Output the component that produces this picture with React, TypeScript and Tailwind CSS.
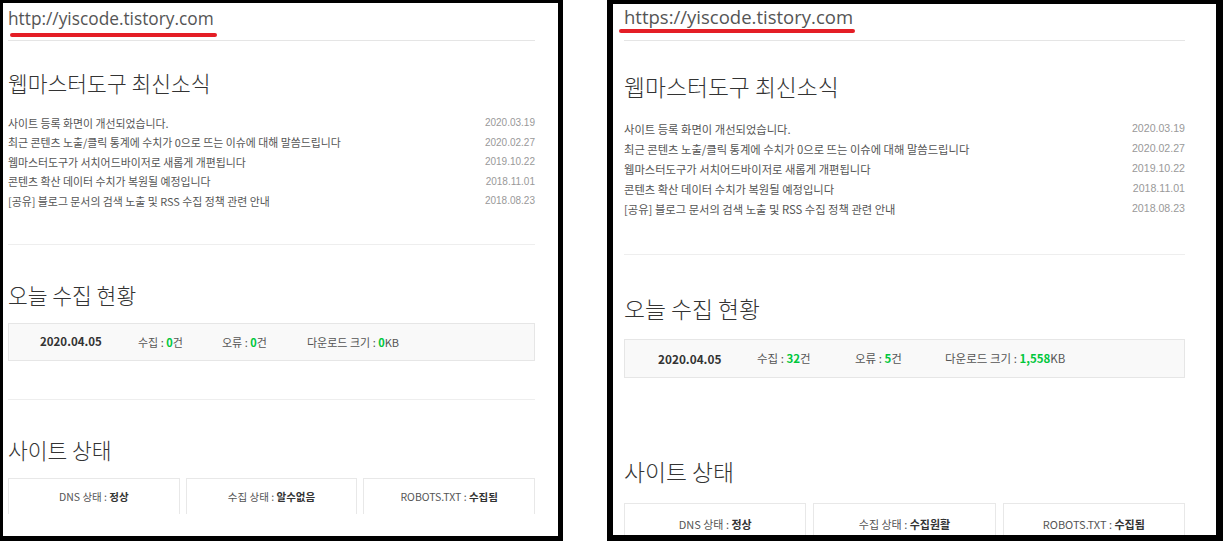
import React from "react";

const items: [string, string][] = [
  ["사이트 등록 화면이 개선되었습니다.", "2020.03.19"],
  ["최근 콘텐츠 노출/클릭 통계에 수치가 0으로 뜨는 이슈에 대해 말씀드립니다", "2020.02.27"],
  ["웹마스터도구가 서치어드바이저로 새롭게 개편됩니다", "2019.10.22"],
  ["콘텐츠 확산 데이터 수치가 복원될 예정입니다", "2018.11.01"],
  ["[공유] 블로그 문서의 검색 노출 및 RSS 수집 정책 관련 안내", "2018.08.23"],
];

function LeftPanel() {
  return (
    <div className="flex flex-col w-[563px] h-[541px] shrink-0 border-black border-l-[3px] border-t-[3px] border-r-[5px] border-b-[5px] bg-white">
      <div className="ml-[5px] w-[527px] flex flex-col">
        <div className="pt-[5px] pb-[3px] border-b border-[#e5e5e5]">
          <div className="h-[22px] leading-[22px] text-[17.3px] text-[#555] font-['Open_Sans',sans-serif]">http://yiscode.tistory.com</div>
          <div className="mt-[3px] ml-[2px] w-[207px] h-[4px] rounded-full bg-[#e41e26]" />
        </div>
        <div className="mt-[28px] h-[28px] leading-[28px] text-[21.5px] font-light text-[#333]">웹마스터도구 최신소식</div>
        <div className="mt-[16px]">
          {items.map(([t, d]) => (
            <div key={d} className="h-[19.5px] flex items-center justify-between">
              <span className="text-[10.9px] text-[#555]">{t}</span>
              <span className="text-[10px] text-[#999] font-['Liberation_Sans',sans-serif]">{d}</span>
            </div>
          ))}
        </div>
        <div className="mt-[33.5px] border-t border-[#eee]" />
        <div className="mt-[36px] h-[28px] leading-[28px] text-[21.5px] font-light text-[#333]">오늘 수집 현황</div>
        <div className="mt-[14px] h-[38px] border border-[#e6e6e6] bg-[#f9f9f9] flex items-center pl-[31px] text-[11px] text-[#555]">
          <span className="font-bold text-[#333] text-[11.5px] w-[98px]">2020.04.05</span>
          <span className="w-[84px]">수집 : <b className="text-[#00c73c]">0</b>건</span>
          <span className="w-[85px]">오류 : <b className="text-[#00c73c]">0</b>건</span>
          <span>다운로드 크기 : <b className="text-[#00c73c]">0</b>KB</span>
        </div>
        <div className="mt-[38px] border-t border-[#eee]" />
        <div className="mt-[36px] h-[28px] leading-[28px] text-[21.5px] font-light text-[#333]">사이트 상태</div>
        <div className="mt-[14px] grid grid-cols-3 gap-[6px]">
          {[
            ["DNS 상태", "정상"],
            ["수집 상태", "알수없음"],
            ["ROBOTS.TXT", "수집됨"],
          ].map(([k, v]) => (
            <div key={k} className="h-[36px] border-t border-l border-r border-[#e8e8e8] flex items-center justify-center text-[10.5px] text-[#555]">
              <span>{k} : <b className="text-[#333]">{v}</b></span>
            </div>
          ))}
        </div>
      </div>
    </div>
  );
}

function RightPanel() {
  return (
    <div className="flex flex-col w-[616px] h-[541px] shrink-0 border-black border-l-[6px] border-t-[4px] border-r-[7px] border-b-[6px] bg-white">
      <div className="ml-[11px] w-[561px] flex flex-col flex-1">
        <div className="pt-[2px] pb-[7px] border-b border-[#e5e5e5]">
          <div className="h-[22px] leading-[22px] text-[18.5px] text-[#555] font-['Open_Sans',sans-serif]">https://yiscode.tistory.com</div>
          <div className="mt-[1px] ml-[-5px] w-[236px] h-[4px] rounded-full bg-[#e41e26]" />
        </div>
        <div className="mt-[31px] h-[30px] leading-[30px] text-[22.8px] font-light text-[#333]">웹마스터도구 최신소식</div>
        <div className="mt-[17px]">
          {items.map(([t, d]) => (
            <div key={d} className="h-[20px] flex items-center justify-between">
              <span className="text-[11.3px] text-[#555]">{t}</span>
              <span className="text-[10.6px] text-[#999] font-['Liberation_Sans',sans-serif]">{d}</span>
            </div>
          ))}
        </div>
        <div className="mt-[35px] border-t border-[#eee]" />
        <div className="mt-[39px] h-[30px] leading-[30px] text-[22.8px] font-light text-[#333]">오늘 수집 현황</div>
        <div className="mt-[15px] h-[39px] border border-[#e6e6e6] bg-[#f9f9f9] flex items-center pl-[33px] text-[11.5px] text-[#555]">
          <span className="font-bold text-[#333] text-[11.8px] w-[99px]">2020.04.05</span>
          <span className="w-[98px]">수집 : <b className="text-[#00c73c]">32</b>건</span>
          <span className="w-[90px]">오류 : <b className="text-[#00c73c]">5</b>건</span>
          <span>다운로드 크기 : <b className="text-[#00c73c]">1,558</b>KB</span>
        </div>
        <div className="mt-[79px] h-[30px] leading-[30px] text-[22.8px] font-light text-[#333]">사이트 상태</div>
        <div className="mt-[16px] grid grid-cols-3 gap-[7px] flex-1">
          {[
            ["DNS 상태", "정상"],
            ["수집 상태", "수집원활"],
            ["ROBOTS.TXT", "수집됨"],
          ].map(([k, v]) => (
            <div key={k} className="border-t border-l border-r border-[#e8e8e8] flex justify-center pt-[12px] text-[11px] text-[#555]">
              <span>{k} : <b className="text-[#333]">{v}</b></span>
            </div>
          ))}
        </div>
      </div>
    </div>
  );
}

export default function App() {
  return (
    <div className="w-[1223px] h-[541px] bg-white flex gap-[44px] font-['Noto_Sans_CJK_KR','Noto_Sans',sans-serif] overflow-hidden">
      <LeftPanel />
      <RightPanel />
    </div>
  );
}
